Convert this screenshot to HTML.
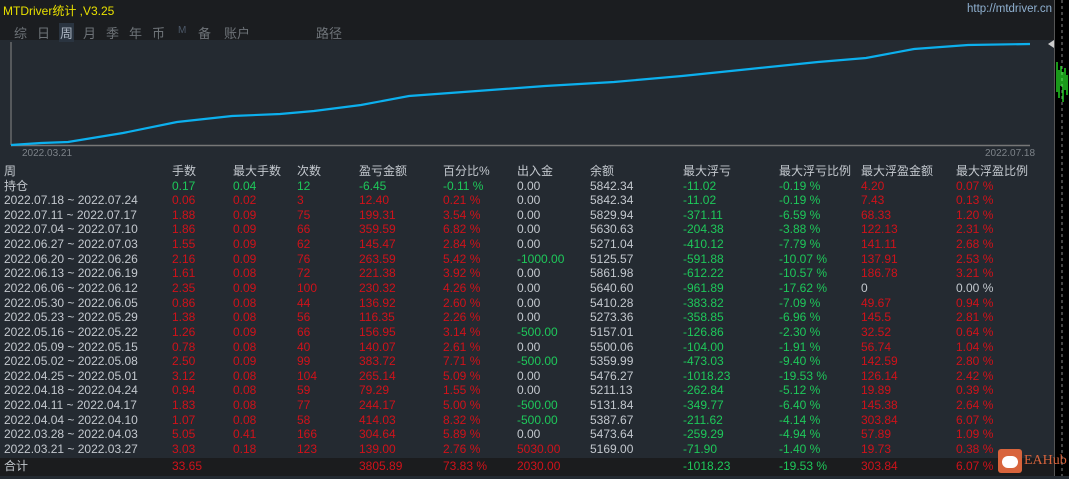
<!DOCTYPE html>
<html><head><meta charset="utf-8">
<style>
*{margin:0;padding:0;box-sizing:border-box}
body{width:1069px;height:476px;overflow:hidden;background:#242a31;font-family:"Liberation Sans","Noto Sans CJK SC",sans-serif;font-size:12px;color:#c3c8ce;position:relative}
#top{position:absolute;left:0;top:0;width:1054px;height:40px;background:#1b1d20}
#title{position:absolute;left:3px;top:2px;color:#e8e000;font-size:12px}
#url{position:absolute;left:967px;top:3px;color:#8fb0d0;font-size:11.5px}
#tabs{position:absolute;left:14px;top:23px;font-size:13px;color:#6e7378}
#tabs span{position:absolute;top:0;white-space:nowrap}
#right{position:absolute;left:1054px;top:0;width:15px;height:476px;background:#000;border-left:1px solid #555}
.r{position:absolute;left:0;height:15px;line-height:15px;width:1054px;white-space:nowrap}
.r span{position:absolute;top:0}
.a{left:4px}.b{left:172px}.c{left:233px}.d{left:297px}.e{left:359px}.f{left:443px}.g{left:517px}.h{left:590px}.i{left:683px}.j{left:779px}.k{left:861px}.l{left:956px}
.R{color:#d0121a}.G{color:#1ec85a}.W{color:#c3c8ce}
</style></head><body>
<div id="top">
<div id="title">MTDriver统计 ,V3.25</div>
<div id="url">http://mtdriver.cn</div>
<div id="tabs">
<span style="left:0">综</span><span style="left:23px">日</span>
<span style="left:45px;color:#aab4c0;background:#2a3440;padding:0 1px">周</span>
<span style="left:69px">月</span><span style="left:92px">季</span><span style="left:115px">年</span><span style="left:138px">币</span>
<span style="left:164px;font-size:10px;top:2px;color:#4c5868">M</span>
<span style="left:184px">备</span><span style="left:210px">账户</span><span style="left:302px">路径</span>
</div>
</div>
<svg style="position:absolute;left:0;top:40px" width="1054" height="120">
<line x1="11" y1="2" x2="11" y2="105" stroke="#888" stroke-width="1"/>
<line x1="11" y1="105.5" x2="1030" y2="105.5" stroke="#777" stroke-width="1.5"/>
<polyline fill="none" stroke="#0cb0ee" stroke-width="2.2" points="11,105 41,103 68,102 123,93 177,82 232,76 280,74 314,71 361,65 409,56 477,51 545,46 614,42 682,36 750,29 818,22 866,18 914,9 968,5 1030,4"/>
<path d="M1048,0 l6,-4 l0,8z" fill="#ccc" transform="translate(0,4)"/>
<text x="22" y="116" fill="#7c8288" font-size="10" font-family="Liberation Sans">2022.03.21</text>
<text x="985" y="116" fill="#7c8288" font-size="10" font-family="Liberation Sans">2022.07.18</text>
</svg>
<div id="right">
<svg width="15" height="476"><line x1="7" y1="0" x2="7" y2="476" stroke="#888" stroke-dasharray="3,3"/>
<path d="M2,62 v30 M4,70 v28 M6,66 v20 M8,72 v30 M10,68 v22 M12,75 v20" stroke="#22cc22" stroke-width="1.5"/></svg>
</div>

<div class="r" style="top:164px"><span class="a">周</span><span class="b">手数</span><span class="c">最大手数</span><span class="d">次数</span><span class="e">盈亏金额</span><span class="f">百分比%</span><span class="g">出入金</span><span class="h">余额</span><span class="i">最大浮亏</span><span class="j">最大浮亏比例</span><span class="k">最大浮盈金额</span><span class="l">最大浮盈比例</span></div>
<div class="r" style="top:178.5px"><span class="a">持仓</span><span class="b G">0.17</span><span class="c G">0.04</span><span class="d G">12</span><span class="e G">-6.45</span><span class="f G">-0.11 %</span><span class="g">0.00</span><span class="h">5842.34</span><span class="i G">-11.02</span><span class="j G">-0.19 %</span><span class="k R">4.20</span><span class="l R">0.07 %</span></div>
<div class="r" style="top:193px"><span class="a">2022.07.18 ~ 2022.07.24</span><span class="b R">0.06</span><span class="c R">0.02</span><span class="d R">3</span><span class="e R">12.40</span><span class="f R">0.21 %</span><span class="g">0.00</span><span class="h">5842.34</span><span class="i G">-11.02</span><span class="j G">-0.19 %</span><span class="k R">7.43</span><span class="l R">0.13 %</span></div>
<div class="r" style="top:207.6px"><span class="a">2022.07.11 ~ 2022.07.17</span><span class="b R">1.88</span><span class="c R">0.09</span><span class="d R">75</span><span class="e R">199.31</span><span class="f R">3.54 %</span><span class="g">0.00</span><span class="h">5829.94</span><span class="i G">-371.11</span><span class="j G">-6.59 %</span><span class="k R">68.33</span><span class="l R">1.20 %</span></div>
<div class="r" style="top:222.3px"><span class="a">2022.07.04 ~ 2022.07.10</span><span class="b R">1.86</span><span class="c R">0.09</span><span class="d R">66</span><span class="e R">359.59</span><span class="f R">6.82 %</span><span class="g">0.00</span><span class="h">5630.63</span><span class="i G">-204.38</span><span class="j G">-3.88 %</span><span class="k R">122.13</span><span class="l R">2.31 %</span></div>
<div class="r" style="top:236.9px"><span class="a">2022.06.27 ~ 2022.07.03</span><span class="b R">1.55</span><span class="c R">0.09</span><span class="d R">62</span><span class="e R">145.47</span><span class="f R">2.84 %</span><span class="g">0.00</span><span class="h">5271.04</span><span class="i G">-410.12</span><span class="j G">-7.79 %</span><span class="k R">141.11</span><span class="l R">2.68 %</span></div>
<div class="r" style="top:251.6px"><span class="a">2022.06.20 ~ 2022.06.26</span><span class="b R">2.16</span><span class="c R">0.09</span><span class="d R">76</span><span class="e R">263.59</span><span class="f R">5.42 %</span><span class="g G">-1000.00</span><span class="h">5125.57</span><span class="i G">-591.88</span><span class="j G">-10.07 %</span><span class="k R">137.91</span><span class="l R">2.53 %</span></div>
<div class="r" style="top:266.2px"><span class="a">2022.06.13 ~ 2022.06.19</span><span class="b R">1.61</span><span class="c R">0.08</span><span class="d R">72</span><span class="e R">221.38</span><span class="f R">3.92 %</span><span class="g">0.00</span><span class="h">5861.98</span><span class="i G">-612.22</span><span class="j G">-10.57 %</span><span class="k R">186.78</span><span class="l R">3.21 %</span></div>
<div class="r" style="top:280.9px"><span class="a">2022.06.06 ~ 2022.06.12</span><span class="b R">2.35</span><span class="c R">0.09</span><span class="d R">100</span><span class="e R">230.32</span><span class="f R">4.26 %</span><span class="g">0.00</span><span class="h">5640.60</span><span class="i G">-961.89</span><span class="j G">-17.62 %</span><span class="k W">0</span><span class="l W">0.00 %</span></div>
<div class="r" style="top:295.5px"><span class="a">2022.05.30 ~ 2022.06.05</span><span class="b R">0.86</span><span class="c R">0.08</span><span class="d R">44</span><span class="e R">136.92</span><span class="f R">2.60 %</span><span class="g">0.00</span><span class="h">5410.28</span><span class="i G">-383.82</span><span class="j G">-7.09 %</span><span class="k R">49.67</span><span class="l R">0.94 %</span></div>
<div class="r" style="top:310.2px"><span class="a">2022.05.23 ~ 2022.05.29</span><span class="b R">1.38</span><span class="c R">0.08</span><span class="d R">56</span><span class="e R">116.35</span><span class="f R">2.26 %</span><span class="g">0.00</span><span class="h">5273.36</span><span class="i G">-358.85</span><span class="j G">-6.96 %</span><span class="k R">145.5</span><span class="l R">2.81 %</span></div>
<div class="r" style="top:324.8px"><span class="a">2022.05.16 ~ 2022.05.22</span><span class="b R">1.26</span><span class="c R">0.09</span><span class="d R">66</span><span class="e R">156.95</span><span class="f R">3.14 %</span><span class="g G">-500.00</span><span class="h">5157.01</span><span class="i G">-126.86</span><span class="j G">-2.30 %</span><span class="k R">32.52</span><span class="l R">0.64 %</span></div>
<div class="r" style="top:339.5px"><span class="a">2022.05.09 ~ 2022.05.15</span><span class="b R">0.78</span><span class="c R">0.08</span><span class="d R">40</span><span class="e R">140.07</span><span class="f R">2.61 %</span><span class="g">0.00</span><span class="h">5500.06</span><span class="i G">-104.00</span><span class="j G">-1.91 %</span><span class="k R">56.74</span><span class="l R">1.04 %</span></div>
<div class="r" style="top:354.1px"><span class="a">2022.05.02 ~ 2022.05.08</span><span class="b R">2.50</span><span class="c R">0.09</span><span class="d R">99</span><span class="e R">383.72</span><span class="f R">7.71 %</span><span class="g G">-500.00</span><span class="h">5359.99</span><span class="i G">-473.03</span><span class="j G">-9.40 %</span><span class="k R">142.59</span><span class="l R">2.80 %</span></div>
<div class="r" style="top:368.8px"><span class="a">2022.04.25 ~ 2022.05.01</span><span class="b R">3.12</span><span class="c R">0.08</span><span class="d R">104</span><span class="e R">265.14</span><span class="f R">5.09 %</span><span class="g">0.00</span><span class="h">5476.27</span><span class="i G">-1018.23</span><span class="j G">-19.53 %</span><span class="k R">126.14</span><span class="l R">2.42 %</span></div>
<div class="r" style="top:383.4px"><span class="a">2022.04.18 ~ 2022.04.24</span><span class="b R">0.94</span><span class="c R">0.08</span><span class="d R">59</span><span class="e R">79.29</span><span class="f R">1.55 %</span><span class="g">0.00</span><span class="h">5211.13</span><span class="i G">-262.84</span><span class="j G">-5.12 %</span><span class="k R">19.89</span><span class="l R">0.39 %</span></div>
<div class="r" style="top:398.1px"><span class="a">2022.04.11 ~ 2022.04.17</span><span class="b R">1.83</span><span class="c R">0.08</span><span class="d R">77</span><span class="e R">244.17</span><span class="f R">5.00 %</span><span class="g G">-500.00</span><span class="h">5131.84</span><span class="i G">-349.77</span><span class="j G">-6.40 %</span><span class="k R">145.38</span><span class="l R">2.64 %</span></div>
<div class="r" style="top:412.7px"><span class="a">2022.04.04 ~ 2022.04.10</span><span class="b R">1.07</span><span class="c R">0.08</span><span class="d R">58</span><span class="e R">414.03</span><span class="f R">8.32 %</span><span class="g G">-500.00</span><span class="h">5387.67</span><span class="i G">-211.62</span><span class="j G">-4.14 %</span><span class="k R">303.84</span><span class="l R">6.07 %</span></div>
<div class="r" style="top:427.4px"><span class="a">2022.03.28 ~ 2022.04.03</span><span class="b R">5.05</span><span class="c R">0.41</span><span class="d R">166</span><span class="e R">304.64</span><span class="f R">5.89 %</span><span class="g">0.00</span><span class="h">5473.64</span><span class="i G">-259.29</span><span class="j G">-4.94 %</span><span class="k R">57.89</span><span class="l R">1.09 %</span></div>
<div class="r" style="top:442px"><span class="a">2022.03.21 ~ 2022.03.27</span><span class="b R">3.03</span><span class="c R">0.18</span><span class="d R">123</span><span class="e R">139.00</span><span class="f R">2.76 %</span><span class="g R">5030.00</span><span class="h">5169.00</span><span class="i G">-71.90</span><span class="j G">-1.40 %</span><span class="k R">19.73</span><span class="l R">0.38 %</span></div>
<div style="position:absolute;left:0;top:458px;width:1054px;height:18px;background:#1b1c1e"></div>
<div class="r" style="top:459px"><span class="a">合计</span><span class="b R">33.65</span><span class="e R">3805.89</span><span class="f R">73.83 %</span><span class="g R">2030.00</span><span class="i G">-1018.23</span><span class="j G">-19.53 %</span><span class="k R">303.84</span><span class="l R">6.07 %</span></div>
<div style="position:absolute;left:998px;top:449px;width:24px;height:24px;background:#d8643c;border-radius:3px"><div style="position:absolute;left:4px;top:7px;width:16px;height:12px;background:#fff;border-radius:6px"></div></div>
<div style="position:absolute;left:1024px;top:453px;color:#d8643c;font-family:'Liberation Serif',serif;font-size:14px">EAHub</div>
</body></html>
